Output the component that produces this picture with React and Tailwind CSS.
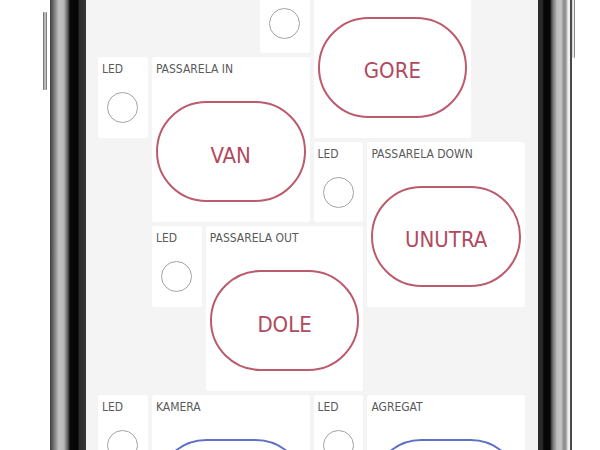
import React from 'react';

const RED = { ring: 'border-[#bb5b6e]', text: 'text-[#b14a5e]' };
const BLUE = { ring: 'border-[#5f71c6]', text: 'text-[#5c6ec4]' };

const Label = ({ children }) => (
    <div className="h-[19px] px-[4px] pt-[6px] text-[12px] leading-[13px] text-[#5a5a5a] whitespace-nowrap font-['Liberation_Sans_Narrow','DejaVu_Sans_Condensed',Roboto,sans-serif]">
        {children}
    </div>
);

// cards scrolled past the top edge have their labels out of view
const Led = ({ className, hideLabel }) => (
    <div className={`bg-white rounded-[3px] flex flex-col overflow-hidden ${className}`}>
        {hideLabel ? <div className="h-[19px]"></div> : <Label>LED</Label>}
        <div className="mt-[16px] mx-auto w-[31px] h-[31px] rounded-full border border-[#a3a3a3]"></div>
    </div>
);

const PushButton = ({ className, label, text, tone = RED }) => (
    <div className={`bg-white rounded-[3px] flex flex-col overflow-hidden ${className}`}>
        {label ? <Label>{label}</Label> : <div className="h-[19px]"></div>}
        <div className={`mt-auto mb-[20px] mx-[4px] h-[101px] rounded-full border-2 ${tone.ring} flex items-center justify-center pt-[7px]`}>
            <span className={`text-[22px] ${tone.text} font-['Liberation_Sans_Narrow','DejaVu_Sans_Condensed',Roboto,sans-serif]`}>{text}</span>
        </div>
    </div>
);

export default function App() {
    return (
        <div className="w-[600px] h-[450px] bg-white flex overflow-hidden">
            {/* left side with volume key */}
            <div className="w-[50px] shrink-0 pt-[12px] pl-[43px]">
                <div className="w-[4px] h-[78px] rounded-[1px] bg-[linear-gradient(to_right,#555,#d8d8d8_50%,#666)]"></div>
            </div>
            <div className="w-[36px] shrink-0 bg-[linear-gradient(to_right,#3c3c3c_0px,#777_4px,#c2c2c2_9px,#b5b5b5_14px,#575757_18px,#0a0a0a_20px,#040404_28px,#2c2c2c_29px,#363636_36px)]"></div>

            {/* screen */}
            <div className="w-[452px] h-[450px] shrink-0 bg-[#f4f4f4] overflow-hidden">
                <div className="ml-[12px] mt-[-27.5px] w-[427px] grid grid-cols-8 auto-rows-[80.5px] gap-[4px]">
                    <Led className="col-start-4 row-start-1" hideLabel />
                    <PushButton className="col-start-5 col-span-3 row-start-1 row-span-2" text="GORE" />
                    <Led className="col-start-1 row-start-2" />
                    <PushButton className="col-start-2 col-span-3 row-start-2 row-span-2" label="PASSARELA IN" text="VAN" />
                    <Led className="col-start-5 row-start-3" />
                    <PushButton className="col-start-6 col-span-3 row-start-3 row-span-2" label="PASSARELA DOWN" text="UNUTRA" />
                    <Led className="col-start-2 row-start-4" />
                    <PushButton className="col-start-3 col-span-3 row-start-4 row-span-2" label="PASSARELA OUT" text="DOLE" />
                    <Led className="col-start-1 row-start-6" />
                    <PushButton className="col-start-2 col-span-3 row-start-6 row-span-2" label="KAMERA" text="" tone={BLUE} />
                    <Led className="col-start-5 row-start-6" />
                    <PushButton className="col-start-6 col-span-3 row-start-6 row-span-2" label="AGREGAT" text="" tone={BLUE} />
                </div>
            </div>

            {/* right side with power key */}
            <div className="w-[32px] shrink-0 bg-[linear-gradient(to_right,#2a2a2a_0px,#2a2a2a_4px,#060606_6px,#050505_12px,#606060_14px,#bdbdbd_19px,#c4c4c4_23px,#8a8a8a_26px,#9a9a9a_28px,#eeeeee_30px,#f4f4f4_32px)]"></div>
            <div className="w-[2px] shrink-0 bg-[#4a4a4a]"></div>
            <div className="w-[3px] h-[58px] shrink-0 rounded-b-[1px] bg-[linear-gradient(to_right,#cfcfcf,#f0f0f0_60%,#444)]"></div>
        </div>
    );
}
